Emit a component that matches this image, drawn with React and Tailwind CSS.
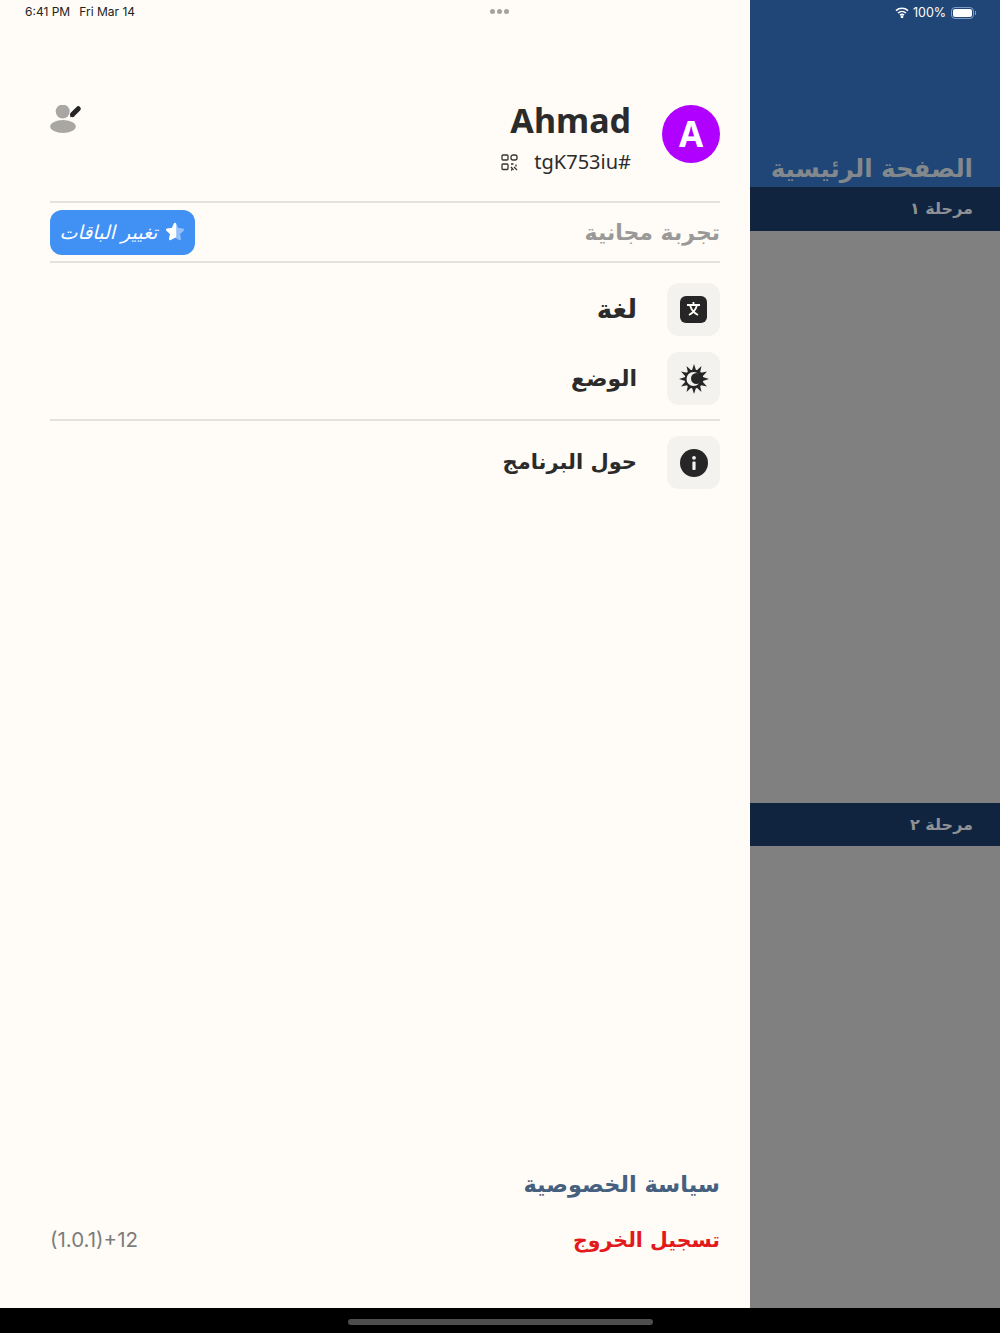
const arabicFont = "font-['DejaVu_Sans',sans-serif]";

function UserEditIcon() {
  return (
    <svg width="32" height="29" viewBox="0 0 32 29">
      <circle cx="12.7" cy="6.5" r="7" fill="#a8a7a4" />
      <ellipse cx="13" cy="21.5" rx="12.8" ry="6.5" fill="#a8a7a4" />
      <path d="M22.5 9.5 L28.3 3.7" stroke="#262626" strokeWidth="5" strokeLinecap="round" />
      <path d="M20.2 12.2 L21 8 L24.5 11.3 Z" fill="#262626" />
    </svg>
  );
}

function QrIcon() {
  return (
    <svg width="17" height="17" viewBox="0 0 17 17" fill="none" stroke="#333" strokeWidth="1.3">
      <rect x="1" y="1" width="6" height="5" rx="1" />
      <rect x="10" y="1" width="6" height="5" rx="2" />
      <rect x="1" y="10" width="6" height="5.5" rx="1" />
      <path d="M10 10h2.5M15 10.5v2M10 13l2.5 3M13 13l3 3M10 16h1" />
    </svg>
  );
}

function TranslateIcon() {
  return (
    <svg width="27" height="27" viewBox="0 0 27 27">
      <rect width="27" height="27" rx="6" fill="#262626" />
      <path d="M13.5 6v2.5M7 9h13M10 9c1 4 4 8 8 10M17 9c-1 4-4 8-8 10" stroke="#fffcf7" strokeWidth="1.8" fill="none" />
    </svg>
  );
}

function ThemeIcon() {
  const rays = [0, 30, 60, 90, 120, 150, 180, 210, 240, 270, 300, 330];
  return (
    <svg width="30" height="30" viewBox="0 0 30 30">
      {rays.map((deg) => (
        <path key={deg} d="M15 0 L17.2 7 L12.8 7 Z" fill="#262626" transform={`rotate(${deg} 15 15)`} />
      ))}
      <circle cx="15" cy="15" r="9.5" fill="#262626" />
      <circle cx="14.5" cy="15" r="7" fill="#f4f2ef" />
      <circle cx="17.5" cy="14.5" r="5.5" fill="#262626" />
    </svg>
  );
}

function InfoIcon() {
  return (
    <svg width="28" height="28" viewBox="0 0 28 28">
      <circle cx="14" cy="14" r="14" fill="#262626" />
      <circle cx="14" cy="8.8" r="1.9" fill="#f4f2ef" />
      <rect x="12.4" y="12.5" width="3.2" height="8.5" rx="1" fill="#f4f2ef" />
    </svg>
  );
}

function StarIcon() {
  return (
    <svg width="20" height="20" viewBox="0 0 20 20" strokeLinejoin="round" strokeWidth="2.4">
      <path d="M10 2l2.4 5 5.4.8-4 3.8 1 5.4L10 14.5Z" fill="#93c0f9" stroke="#93c0f9" />
      <path d="M10 2L7.6 7l-5.4.8 4 3.8-1 5.4L10 14.5Z" fill="#ffffff" stroke="#ffffff" />
    </svg>
  );
}

function WifiIcon() {
  return (
    <svg width="14" height="11" viewBox="0 0 14 11" fill="none" stroke="#ffffff" strokeWidth="1.6">
      <path d="M1 3.6a9 9 0 0 1 12 0M3 6a6 6 0 0 1 8 0M5 8.2a3 3 0 0 1 4 0" />
      <circle cx="7" cy="9.8" r="0.6" fill="#ffffff" />
    </svg>
  );
}

function MenuRow({ icon, label, className, labelClass = 'text-[22px]' }) {
  return (
    <div className={`flex h-[53px] items-center gap-[30px] ${className || ''}`}>
      <div className="flex h-[53px] w-[53px] items-center justify-center rounded-[12px] bg-[#f4f2ef]">{icon}</div>
      <span className={`${arabicFont} ${labelClass} font-bold text-[#2b2b2b]`}>{label}</span>
    </div>
  );
}

function Stage({ label, className }) {
  return (
    <div className={`flex items-center justify-start bg-[#11243f] pr-[27px] ${className}`} dir="rtl">
      <span className={`${arabicFont} text-[16px] font-bold text-[#8f9194]`}>{label}</span>
    </div>
  );
}

export default function App() {
  return (
    <div className="relative flex h-[1333px] w-[1000px] flex-col overflow-hidden bg-black">
      <div className="absolute left-[25px] top-[5px] flex gap-[9px] font-['Inter',sans-serif] text-[12px] leading-[14px] text-[#222]">
        <span>6:41 PM</span>
        <span>Fri Mar 14</span>
      </div>
      <div className="absolute left-[490px] top-[9px] flex gap-[2px]">
        <span className="h-[5px] w-[5px] rounded-full bg-[#a3a2a0]" />
        <span className="h-[5px] w-[5px] rounded-full bg-[#a3a2a0]" />
        <span className="h-[5px] w-[5px] rounded-full bg-[#a3a2a0]" />
      </div>
      <div className="absolute left-[895px] top-[5px] flex items-center gap-[4px] font-['Inter',sans-serif] text-[12.5px] leading-[15px] text-white">
        <WifiIcon />
        <span>100%</span>
        <div className="ml-[1px] h-[12px] w-[23px] rounded-[4px] border border-[#7f9cc4] p-[1px]">
          <div className="h-full w-full rounded-[2px] bg-white" />
        </div>
        <div className="ml-[-3px] h-[4px] w-[1px] bg-[#7f9cc4]" />
      </div>

      <div className="flex h-[1308px] shrink-0">
        <div className="flex w-[750px] shrink-0 flex-col bg-[#fffcf7] pb-[52px] pl-[50px] pr-[30px] pt-[105px]" dir="rtl">
          <div className="flex h-[98px] items-start justify-between border-b-2 border-[#e4e2df]">
            <div className="flex gap-[31px]">
              <div className="flex h-[58px] w-[58px] items-center justify-center rounded-full bg-[#b000ff] font-['Noto_Sans',sans-serif] text-[35px] font-bold text-white">
                A
              </div>
              <div className="flex flex-col font-['Noto_Sans',sans-serif] text-[#2b2b2b]">
                <span className="mt-[-7px] text-[34px] font-bold leading-[44px]">Ahmad</span>
                <div className="mt-[7px] flex items-center gap-[16px]">
                  <span dir="ltr" className="text-[20px] leading-[26px]">tgK753iu#</span>
                  <QrIcon />
                </div>
              </div>
            </div>
            <UserEditIcon />
          </div>

          <div className="flex h-[60px] items-center justify-between border-b-2 border-[#e4e2df]">
            <span className={`${arabicFont} text-[22px] font-bold text-[#9a9997]`}>تجربة مجانية</span>
            <div className="flex h-[45px] w-[145px] items-center justify-center gap-[8px] rounded-[12px] bg-[#4191f5]">
              <StarIcon />
              <span className={`${arabicFont} text-[19px] italic leading-[24px] text-white`}>تغيير الباقات</span>
            </div>
          </div>

          <MenuRow className="mt-[20px]" icon={<TranslateIcon />} label="لغة" labelClass="text-[26px]" />
          <MenuRow className="mt-[16px]" icon={<ThemeIcon />} label="الوضع" />
          <div className="mt-[14px] h-[2px] bg-[#e4e2df]" />
          <MenuRow className="mt-[15px]" icon={<InfoIcon />} label="حول البرنامج" labelClass="text-[21px]" />

          <div className="mt-auto flex flex-col">
            <span className={`${arabicFont} text-[22.5px] font-bold leading-[32px] text-[#46607f]`}>سياسة الخصوصية</span>
            <div className="mt-[24px] flex items-center justify-between">
              <span className={`${arabicFont} text-[20.5px] font-bold leading-[32px] text-[#e3191b]`}>تسجيل الخروج</span>
              <span dir="ltr" className="font-['Inter',sans-serif] text-[20.5px] text-[#7d7c7a]">(1.0.1)+12</span>
            </div>
          </div>
        </div>

        <div className="flex min-w-0 flex-1 flex-col bg-[#808080]">
          <div className="flex h-[187px] items-end bg-[#1f4677] pr-[27px]" dir="rtl">
            <span className={`${arabicFont} text-[24.5px] font-bold leading-[36px] text-[#83888c]`}>الصفحة الرئيسية</span>
          </div>
          <Stage className="h-[44px]" label="مرحلة ١" />
          <div className="h-[572px]" />
          <Stage className="h-[43px]" label="مرحلة ٢" />
        </div>
      </div>

      <div className="flex flex-1 items-center justify-center bg-black">
        <div className="mt-[3px] h-[6px] w-[305px] rounded-full bg-[#4d4d4d]" />
      </div>
    </div>
  );
}
